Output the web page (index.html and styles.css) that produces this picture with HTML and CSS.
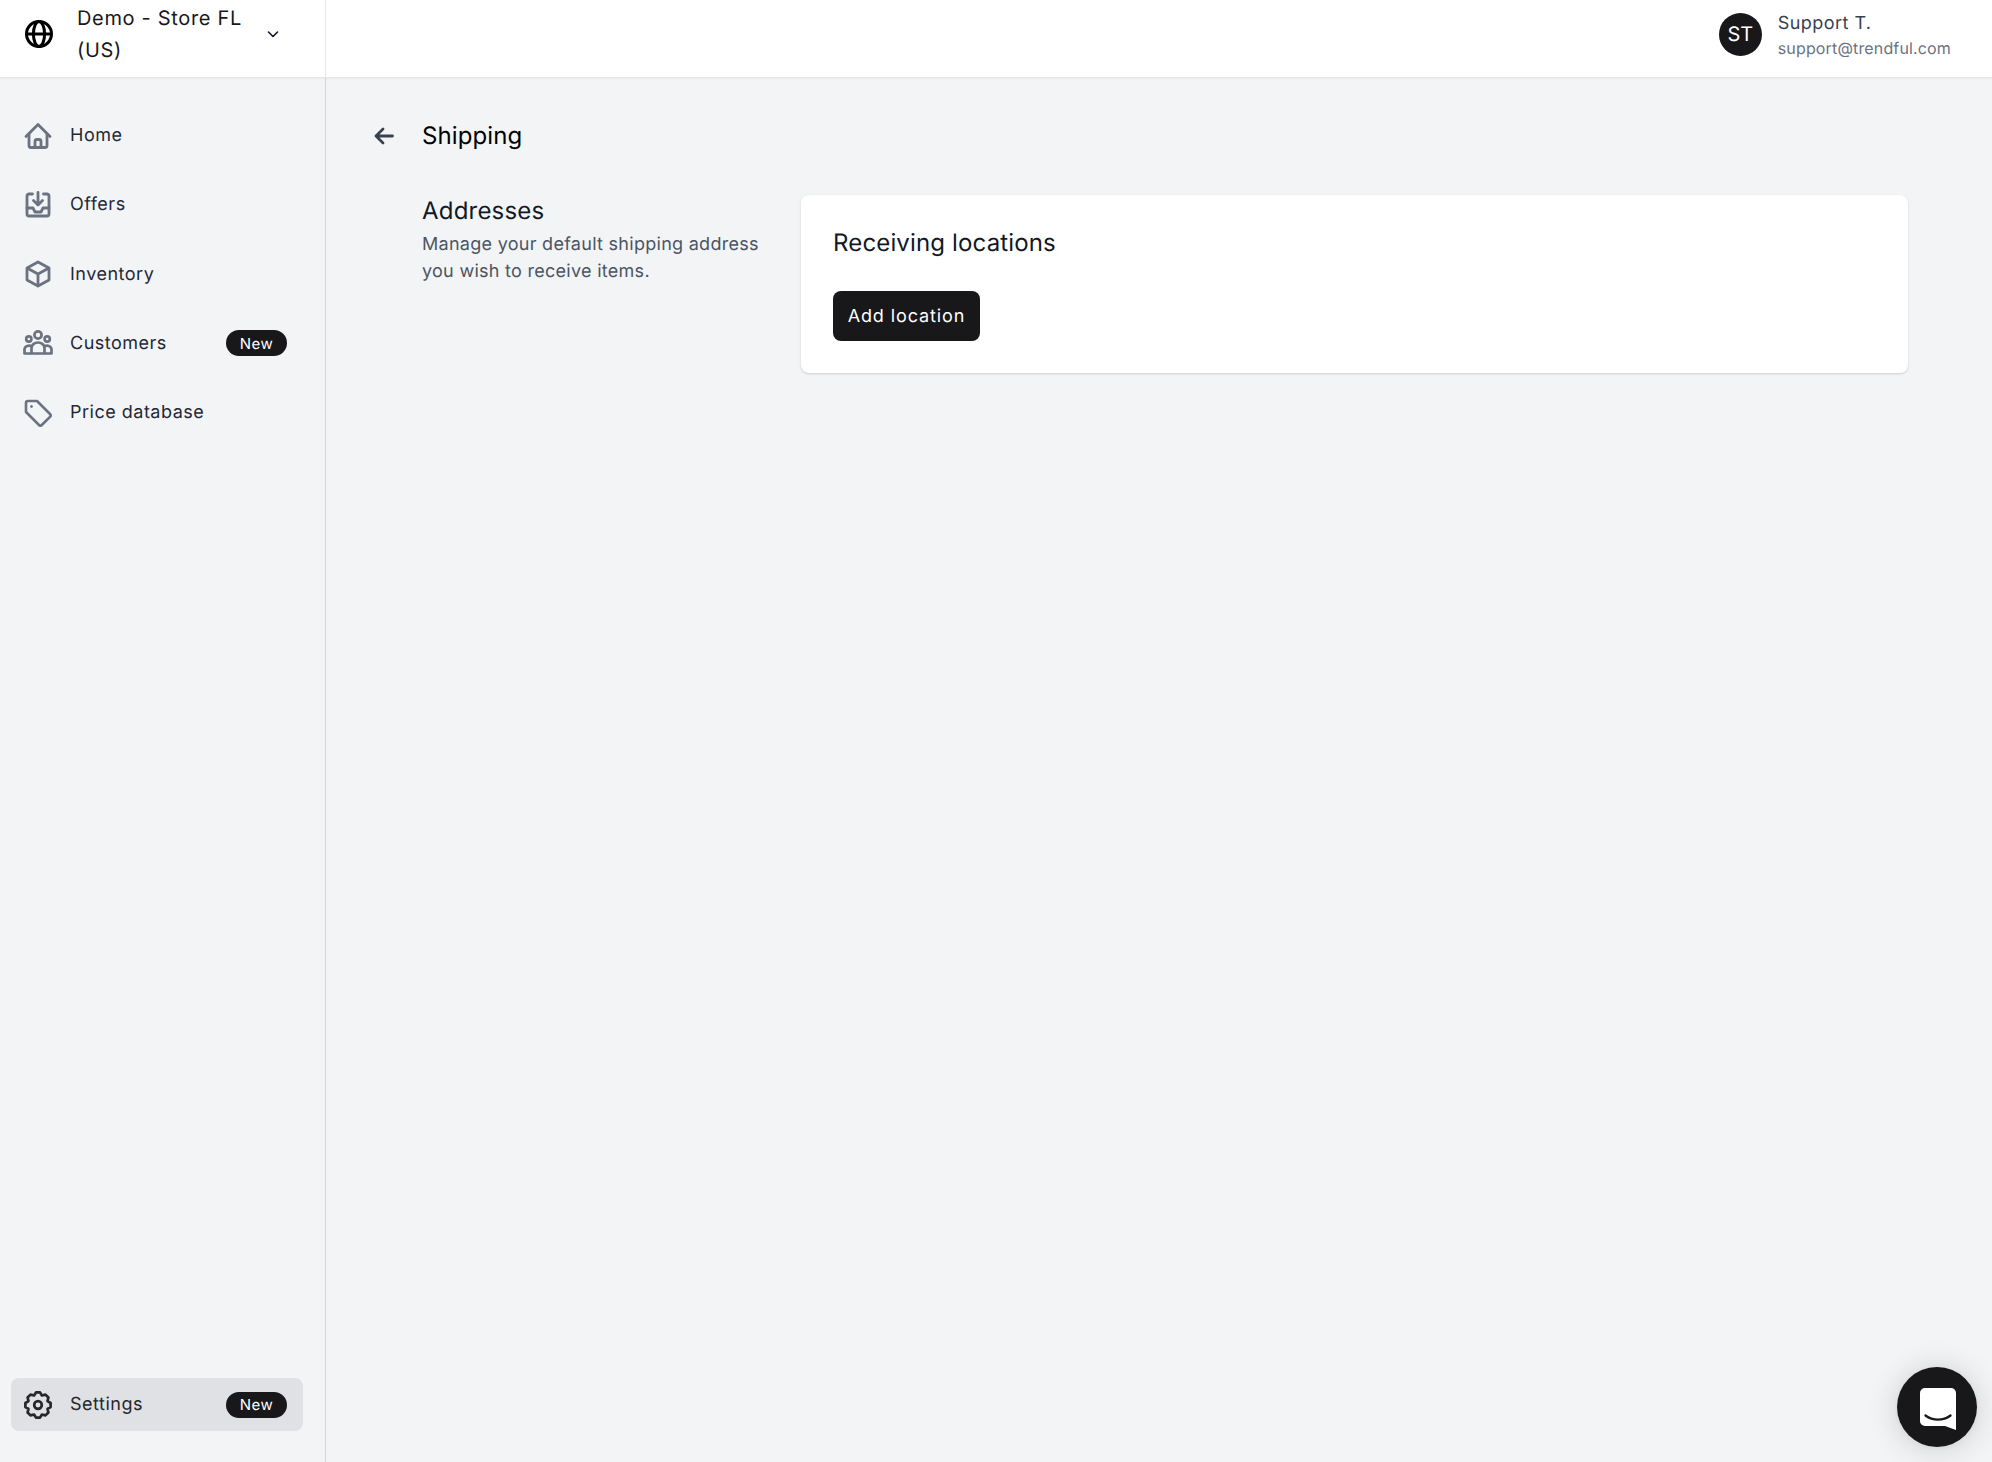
FILE: index.html
```html
<!DOCTYPE html>
<html lang="en">
<head>
<meta charset="utf-8">
<title>Shipping</title>
<link rel="stylesheet" href="styles.css">
</head>
<body>
<header class="topbar">
  <div class="store">
    <svg class="globe" viewBox="0 0 28 28" fill="none" stroke="#000" stroke-width="3"><circle cx="14" cy="14" r="12.500"/><ellipse cx="14" cy="14" rx="5.600" ry="12.500"/><path d="M1.500 14h25"/></svg>
    <div class="store-name">Demo - Store FL (US)</div>
    <svg class="chevron" viewBox="0 0 14 14" fill="none" stroke="#111827" stroke-width="1.600" stroke-linecap="round" stroke-linejoin="round"><path d="M2.500 5l4.500 4.500L11.500 5"/></svg>
  </div>
  <div class="user">
    <div class="avatar">ST</div>
    <div class="user-text">
      <div class="user-name">Support T.</div>
      <div class="user-mail">support@trendful.com</div>
    </div>
  </div>
</header>
<div class="shell">
  <aside class="sidebar">
    <nav class="nav">
      <a class="nav-item"><svg class="icon" viewBox="0 0 28 28" fill="none" stroke="#6b7280" stroke-width="2.800" stroke-linecap="round" stroke-linejoin="round"><path d="M2 14.500L14 2.500l12 12"/><path d="M5 12v11.500a2 2 0 0 0 2 2h14a2 2 0 0 0 2-2V12"/><path d="M11 25.500v-6a2 2 0 0 1 2-2h2a2 2 0 0 1 2 2v6"/></svg><span class="label">Home</span></a>
      <a class="nav-item"><svg class="icon" viewBox="0 0 28 28" fill="none" stroke="#6b7280" stroke-width="2.800" stroke-linecap="round" stroke-linejoin="round"><path d="M8.500 3H5a2 2 0 0 0-2 2v18a2 2 0 0 0 2 2h18a2 2 0 0 0 2-2V5a2 2 0 0 0-2-2h-3.500"/><path d="M3 17h6l2 4h6l2-4h6"/><path d="M14 1.500v12M9.500 9.500l4.500 4.500 4.500-4.500"/></svg><span class="label">Offers</span></a>
      <a class="nav-item"><svg class="icon" viewBox="0 0 28 28" fill="none" stroke="#6b7280" stroke-width="2.800" stroke-linejoin="round"><path d="M14 2l11 6v12l-11 6-11-6V8z"/><path d="M3 8l11 6 11-6M14 14v12"/></svg><span class="label">Inventory</span></a>
      <a class="nav-item"><svg class="icon icon-wide" viewBox="0 0 30 26" fill="none" stroke="#6b7280" stroke-width="2.700" stroke-linejoin="round"><circle cx="15" cy="5" r="3.600"/><circle cx="5.800" cy="9" r="2.600"/><circle cx="24.200" cy="9" r="2.600"/><path d="M8.500 23.500v-5.500a6.500 5.500 0 0 1 13 0v5.500z"/><path d="M8.500 23.500H1.500v-3.500a4.500 4 0 0 1 7.300-3.500M21.500 23.500h7v-3.500a4.500 4 0 0 0-7.300-3.500"/></svg><span class="label">Customers</span><span class="badge">New</span></a>
      <a class="nav-item"><svg class="icon" viewBox="0 0 28 28" fill="none" stroke="#6b7280" stroke-width="2.600" stroke-linejoin="round"><path d="M2 4a2 2 0 0 1 2-2h9l13 13a2 2 0 0 1 0 2.800L17.800 26a2 2 0 0 1-2.800 0L2 13z"/><circle cx="7.500" cy="7.500" r="1" fill="#6b7280" stroke-width="1"/></svg><span class="label">Price database</span></a>
    </nav>
    <a class="nav-item nav-active"><svg class="icon" viewBox="0 0 28 28" fill="none" stroke="#27272a" stroke-width="2.700" stroke-linejoin="round"><path d="M12 1.400h4l1.900 3.100 3.600-.9 2.900 2.900-.9 3.600 3.100 1.900v4l-3.100 1.900.9 3.600-2.900 2.900-3.600-.9-1.900 3.100h-4l-1.900-3.100-3.600.9-2.900-2.900.9-3.600-3.100-1.900v-4l3.100-1.900-.9-3.600 2.900-2.900 3.600.9z"/><circle cx="14" cy="14" r="3.800"/></svg><span class="label label-settings">Settings</span><span class="badge">New</span></a>
  </aside>
  <main class="main">
    <div class="page-head">
      <svg class="back" viewBox="0 0 20 20" fill="none" stroke="#374151" stroke-width="2.800" stroke-linecap="round" stroke-linejoin="round"><path d="M18.500 10H2M9 3l-7 7 7 7"/></svg>
      <h1 class="page-title">Shipping</h1>
    </div>
    <section class="section">
      <div class="section-info">
        <h2 class="section-title">Addresses</h2>
        <p class="section-desc">Manage your default shipping address you wish to receive items.</p>
      </div>
      <div class="card">
        <h3 class="card-title">Receiving locations</h3>
        <button class="btn">Add location</button>
      </div>
    </section>
  </main>
</div>
<button class="chat" aria-label="Chat">
  <svg viewBox="0 0 36 42" width="36" height="42"><path d="M5 0h26a5 5 0 0 1 5 5v37l-11-4H5a5 5 0 0 1-5-5V5a5 5 0 0 1 5-5z" fill="#fff"/><path d="M5.500 27.500c7.500 5.500 17.500 5.500 25 0" fill="none" stroke="#18181b" stroke-width="2.400" stroke-linecap="round"/></svg>
</button>
</body>
</html>
```

FILE: styles.css
```css
* { box-sizing: border-box; }
html, body { height: 100%; }
body {
  margin: 0;
  height: 1462px;
  overflow: hidden;
  display: flex;
  flex-direction: column;
  background: #f3f4f6;
  color: #111827;
  font-family: Inter, "Liberation Sans", sans-serif;
  text-rendering: geometricPrecision;
}
h1, h2, h3, p { margin: 0; font-weight: 400; }
.topbar {
  flex: none;
  height: 78px;
  display: flex;
  justify-content: space-between;
  align-items: center;
  background: #fff;
  border-bottom: 1px solid #e5e7eb;
  box-shadow: 0 1px 2px rgba(0, 0, 0, .04);
  position: relative;
}
.store {
  width: 326px;
  height: 100%;
  display: flex;
  align-items: center;
  padding: 0 0 9px 25px;
  border-right: 1px solid #e5e7eb;
}
.globe { width: 28px; height: 28px; flex: none; }
.store-name {
  width: 176px;
  margin-left: 24px;
  font-size: 20px;
  line-height: 32px;
  letter-spacing: .67px;
  color: #18181b;
}
.chevron { width: 14px; height: 14px; margin-left: 13px; flex: none; }
.user { display: flex; align-items: center; padding: 0 41px 9px 0; }
.avatar {
  width: 43px;
  height: 43px;
  border-radius: 50%;
  background: #18181b;
  color: #fff;
  font-size: 20px;
  display: flex;
  align-items: center;
  justify-content: center;
}
.user-text { margin-left: 16px; }
.user-name { font-size: 18px; line-height: 28px; letter-spacing: .45px; color: #374151; }
.user-mail { font-size: 16px; line-height: 20px; letter-spacing: .15px; color: #6b7280; }
.shell { flex: 1; display: flex; min-height: 0; }
.sidebar {
  width: 326px;
  flex: none;
  display: flex;
  flex-direction: column;
  justify-content: space-between;
  padding: 31px 22px 31px 11px;
  border-right: 1px solid #d1d5db;
}
.nav { display: flex; flex-direction: column; gap: 16.300px; }
.nav-item {
  height: 53px;
  display: flex;
  align-items: center;
  padding: 0 16px 0 13px;
  border-radius: 8px;
  font-size: 18px;
  letter-spacing: .5px;
  color: #1f2937;
}
.icon { width: 28px; height: 28px; flex: none; }
.icon-wide { width: 30px; margin-left: -1px; margin-right: -1px; }
.label { margin-left: 18px; flex: 1; }
.label-settings { padding-bottom: 1px; }
.badge {
  flex: none;
  width: 61px;
  height: 26px;
  border-radius: 13px;
  background: #18181b;
  color: #fff;
  font-size: 15px;
  letter-spacing: .4px;
  display: flex;
  align-items: center;
  justify-content: center;
}
.nav-active { background: #dfe1e4; color: #27272a; }
.main { flex: 1; min-width: 0; padding: 37px 84px 0 47px; }
.page-head { display: flex; align-items: center; height: 40px; }
.back { width: 20px; height: 20px; flex: none; margin: 2px 0 0 1px; }
.page-title { margin-left: 28px; font-size: 24px; letter-spacing: .1px; color: #000; }
.section { display: flex; margin-top: 40px; padding-left: 49px; }
.section-info { width: 379px; flex: none; }
.section-title { font-size: 24px; line-height: 32px; letter-spacing: .2px; color: #111827; margin-bottom: 4px; }
.section-desc {
  width: 350px;
  font-size: 18px;
  line-height: 27px;
  letter-spacing: .28px;
  color: #4b5563;
}
.card {
  flex: 1;
  height: 178px;
  padding: 32px;
  background: #fff;
  border-radius: 8px;
  box-shadow: 0 1px 3px rgba(0, 0, 0, .1), 0 1px 2px rgba(0, 0, 0, .06);
}
.card-title { font-size: 24px; line-height: 32px; letter-spacing: .15px; color: #111827; }
.btn {
  display: block;
  margin-top: 32px;
  width: 147px;
  height: 50px;
  border: 0;
  border-radius: 8px;
  background: #18181b;
  color: #fff;
  font: 400 18px Inter, "Liberation Sans", sans-serif;
  letter-spacing: .9px;
  text-rendering: geometricPrecision;
}
.chat {
  position: fixed;
  right: 15px;
  bottom: 15px;
  width: 80px;
  height: 80px;
  border: 0;
  padding: 3px 0 0 2px;
  border-radius: 50%;
  background: #18181b;
  box-shadow: 0 1px 6px rgba(0, 0, 0, .06), 0 2px 32px rgba(0, 0, 0, .16);
  display: flex;
  align-items: center;
  justify-content: center;
}
```
